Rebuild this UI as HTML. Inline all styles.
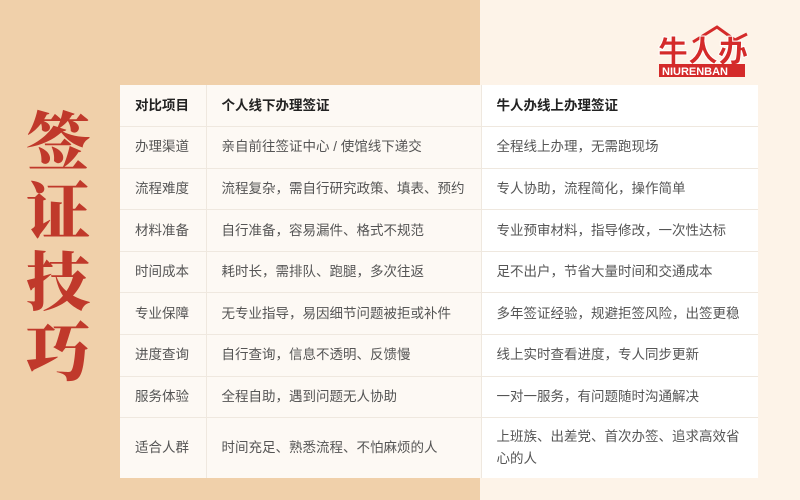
<!DOCTYPE html>
<html><head><meta charset="utf-8"><style>
*{margin:0;padding:0;box-sizing:border-box}
body{width:800px;height:500px;overflow:hidden;position:relative;background:#fdf3e8;font-family:"Liberation Sans","Noto Sans CJK SC",sans-serif}
.tan{position:absolute;left:0;top:0;width:480px;height:500px;background:#f0d0aa}
.title{position:absolute;left:18px;top:103px;width:80px;font-family:"Noto Serif CJK SC",serif;font-weight:900;font-size:64px;line-height:70px;color:#c0392b;text-align:center}
table{position:absolute;left:120px;top:85px;width:638px;border-collapse:collapse;table-layout:fixed;font-size:13.5px;color:#555}
td{height:41.6px;border-bottom:1px solid #efe8df;padding:0 0 0 15px;vertical-align:middle;line-height:22px;white-space:nowrap;overflow:visible}
td:nth-child(1){background:#fdf9f4;border-right:1px solid #efe8df}
td:nth-child(2){background:#fdf9f4;border-right:1px solid #efe8df}
td:nth-child(3){background:#fff}
tr:first-child td{font-weight:bold;color:#222}
tr:last-child td{height:60px;border-bottom:none}
.logo{position:absolute;left:655px;top:22px;width:110px;height:60px}
</style></head><body>
<div class="tan"></div>
<div class="title">签<br>证<br>技<br>巧</div>
<div class="logo">
<svg width="110" height="60" viewBox="0 0 110 60">
<path d="M38 20 L62 5 L80 18 L92 12" fill="none" stroke="#d42a2a" stroke-width="3"/>
<text x="3" y="40" font-family="Noto Sans CJK SC" font-weight="900" font-size="30" fill="#d42a2a" stroke="#fff" stroke-width="1">牛人办</text>
<rect x="4" y="42" width="86" height="13" fill="#d42a2a"/>
<text x="7" y="53" font-family="Liberation Sans" font-weight="bold" font-size="11" fill="#fff">NIURENBAN</text>
</svg></div>
<table>
<colgroup><col style="width:86px"><col style="width:275px"><col style="width:277px"></colgroup>
<tr><td>对比项目</td><td>个人线下办理签证</td><td>牛人办线上办理签证</td></tr>
<tr><td>办理渠道</td><td>亲自前往签证中心 / 使馆线下递交</td><td>全程线上办理，无需跑现场</td></tr>
<tr><td>流程难度</td><td>流程复杂，需自行研究政策、填表、预约</td><td>专人协助，流程简化，操作简单</td></tr>
<tr><td>材料准备</td><td>自行准备，容易漏件、格式不规范</td><td>专业预审材料，指导修改，一次性达标</td></tr>
<tr><td>时间成本</td><td>耗时长，需排队、跑腿，多次往返</td><td>足不出户，节省大量时间和交通成本</td></tr>
<tr><td>专业保障</td><td>无专业指导，易因细节问题被拒或补件</td><td>多年签证经验，规避拒签风险，出签更稳</td></tr>
<tr><td>进度查询</td><td>自行查询，信息不透明、反馈慢</td><td>线上实时查看进度，专人同步更新</td></tr>
<tr><td>服务体验</td><td>全程自助，遇到问题无人协助</td><td>一对一服务，有问题随时沟通解决</td></tr>
<tr><td>适合人群</td><td>时间充足、熟悉流程、不怕麻烦的人</td><td style="white-space:normal;padding-right:12px">上班族、出差党、首次办签、追求高效省心的人</td></tr>
</table>
</body></html>
